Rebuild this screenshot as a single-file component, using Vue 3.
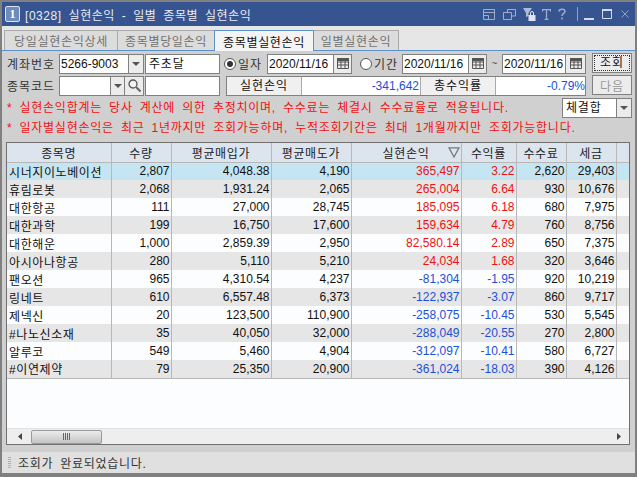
<script setup>
const cols = [104, 60, 100, 80, 110, 55, 50, 50, 14]
const heads = ['종목명', '수량', '평균매입가', '평균매도가', '실현손익', '수익률', '수수료', '세금', '']
const rows = [
  ['시너지이노베이션', '2,807', '4,048.38', '4,190', '365,497', '3.22', '2,620', '29,403'],
  ['휴림로봇', '2,068', '1,931.24', '2,065', '265,004', '6.64', '930', '10,676'],
  ['대한항공', '111', '27,000', '28,745', '185,095', '6.18', '680', '7,975'],
  ['대한과학', '199', '16,750', '17,600', '159,634', '4.79', '760', '8,756'],
  ['대한해운', '1,000', '2,859.39', '2,950', '82,580.14', '2.89', '650', '7,375'],
  ['아시아나항공', '280', '5,110', '5,210', '24,034', '1.68', '320', '3,646'],
  ['팬오션', '965', '4,310.54', '4,237', '-81,304', '-1.95', '920', '10,219'],
  ['링네트', '610', '6,557.48', '6,373', '-122,937', '-3.07', '860', '9,717'],
  ['제넥신', '20', '123,500', '110,900', '-258,075', '-10.45', '530', '5,545'],
  ['#나노신소재', '35', '40,050', '32,000', '-288,049', '-20.55', '270', '2,800'],
  ['알루코', '549', '5,460', '4,904', '-312,097', '-10.41', '580', '6,727'],
  ['#이연제약', '79', '25,350', '20,900', '-361,024', '-18.03', '390', '4,126']
]
const tabs = [
  { label: '당일실현손익상세', w: 114 },
  { label: '종목별당일손익', w: 98 },
  { label: '종목별실현손익', w: 100, active: true },
  { label: '일별실현손익', w: 86 }
]
function cellClass(i, j) {
  if (j === 0) return 'name'
  if (j === 4 || j === 5) return rows[i][4].startsWith('-') ? 'num neg' : 'num pos'
  return 'num'
}
</script>

<template>
  <div class="window">
    <header class="title">
      <span class="appnum">1</span>
      <span class="title-text">[0328] 실현손익 - 일별 종목별 실현손익</span>
      <div class="title-icons">
        <svg class="ic1" width="12" height="11" viewBox="0 0 12 11"><path d="M.5.500h11v10H.5zM.5 3.500h11M.5 6.500h5v4" fill="none" stroke="#9eaecb"/></svg>
        <svg class="ic2" width="13" height="11" viewBox="0 0 13 11"><path d="M4.500 3V.5h8v6.500H9M.5 3.500h8v7h-8z" fill="none" stroke="#9eaecb"/></svg>
        <svg class="ic3" width="13" height="13" viewBox="0 0 13 13"><path d="M0 0h9L5.500 5v3L3 9V5z" fill="#aebbd4"/><path d="M5.500 7h7v6h-7z" fill="#dfe5f0"/><path d="M7.500 7V5a1.500 1.500 0 0 1 3 0v2" fill="none" stroke="#dfe5f0"/></svg>
        <svg class="ic4" width="9" height="11" viewBox="0 0 9 11"><path d="M.5 2.500V.7h8v1.800M4.500 1v9.500M2.500 10.400h4" fill="none" stroke="#9eaecb" stroke-width="1.300"/></svg>
        <svg class="ic5" width="8" height="12" viewBox="0 0 8 12"><path d="M1 3.500C1 .5 7 .3 7 3.500 7 5.500 4 5.500 4 8M4 9.500v2" fill="none" stroke="#9eaecb" stroke-width="1.500"/></svg>
        <i class="sep"></i>
        <svg class="ic6" width="10" height="12" viewBox="0 0 10 12"><path d="M0 10h10v2H0z" fill="#d3dbea"/></svg>
        <svg class="ic7" width="10" height="10" viewBox="0 0 10 10"><path d="M.5 1.500h9v8h-9z" fill="none" stroke="#d3dbea"/><path d="M0 0h10v2H0z" fill="#d3dbea"/></svg>
        <svg class="ic8" width="8" height="8" viewBox="0 0 8 8"><path d="M.5.500l7 7M7.500.500l-7 7" stroke="#8fa2c5" fill="none"/></svg>
      </div>
    </header>

    <nav class="tabs">
      <button v-for="t in tabs" :key="t.label" class="tab" :class="{ active: t.active }" :style="{ width: t.w + 'px' }">{{ t.label }}</button>
    </nav>

    <section class="form">
      <div class="main-row">
        <div class="fields">
          <div class="row">
            <span class="lbl">계좌번호</span>
            <div class="field acct">
              <span class="val numv grow">5266-9003</span>
              <span class="btn-sq w15"><i class="tri"></i></span>
            </div>
            <div class="field name-f"><span class="val">주초달</span></div>
            <span class="radio on"></span><span class="rlbl">일자</span>
            <div class="field d1"><span class="val numv grow">2020/11/16</span><span class="btn-sq w18"><svg width="12" height="11" viewBox="0 0 12 11"><path d="M.5.500h11v10H.5zM.5 4h11M.5 7h11M4 3v8M8 3v8" fill="none" stroke="#555"/><path d="M0 0h12v3H0z" fill="#555"/></svg></span></div>
            <span class="radio r2"></span><span class="rlbl">기간</span>
            <div class="field d2"><span class="val numv grow">2020/11/16</span><span class="btn-sq w18"><svg width="12" height="11" viewBox="0 0 12 11"><path d="M.5.500h11v10H.5zM.5 4h11M.5 7h11M4 3v8M8 3v8" fill="none" stroke="#555"/><path d="M0 0h12v3H0z" fill="#555"/></svg></span></div>
            <span class="tilde">~</span>
            <div class="field d3"><span class="val numv grow">2020/11/16</span><span class="btn-sq w20"><svg width="12" height="11" viewBox="0 0 12 11"><path d="M.5.500h11v10H.5zM.5 4h11M.5 7h11M4 3v8M8 3v8" fill="none" stroke="#555"/><path d="M0 0h12v3H0z" fill="#555"/></svg></span></div>
          </div>
          <div class="row">
            <span class="lbl">종목코드</span>
            <div class="field acct">
              <span class="val grow"></span>
              <span class="btn-sq w14"><i class="tri"></i></span>
              <span class="btn-sq w19"><svg width="13" height="13" viewBox="0 0 13 13"><circle cx="5" cy="5" r="4" fill="#eef3f8" stroke="#555" stroke-width="1.300"/><path d="M8 8l4.500 4.500" stroke="#666" stroke-width="2"/></svg></span>
            </div>
            <div class="field name-f"></div>
            <div class="summary">
              <span class="sum-l">실현손익</span>
              <span class="sum-v v1">-341,642</span>
              <span class="sum-l">총수익률</span>
              <span class="sum-v v2">-0.79%</span>
            </div>
          </div>
        </div>
        <div class="actions">
          <button class="act primary"><span>조회</span></button>
          <button class="act off">다음</button>
        </div>
      </div>

      <div class="note-row">
        <p class="note first">* 실현손익합계는 당사 계산에 의한 추정치이며, 수수료는 체결시 수수료율로 적용됩니다.</p>
        <div class="field select"><span class="val grow">체결합</span><span class="btn-sq w15"><i class="tri"></i></span></div>
      </div>
      <p class="note second">* 일자별실현손익은 최근 1년까지만 조회가능하며, 누적조회기간은 최대 1개월까지만 조회가능합니다.</p>
    </section>

    <section class="grid">
      <div class="grid-body">
        <table>
          <colgroup><col v-for="(c, i) in cols" :key="i" :style="{ width: c + 'px' }" /></colgroup>
          <thead>
            <tr>
              <th v-for="(h, i) in heads" :key="i">
                {{ h }}
                <svg v-if="i === 4" class="sort" width="12" height="11" viewBox="0 0 12 11"><path d="M1 .8h10L6 10z" fill="none" stroke="#777" stroke-width="1.300"/></svg>
              </th>
            </tr>
          </thead>
          <tbody>
            <tr v-for="(r, i) in rows" :key="i" :class="{ sel: i === 0, alt: i % 2 === 1 }">
              <td v-for="(c, j) in r" :key="j" :class="cellClass(i, j)">{{ c }}</td>
              <td></td>
            </tr>
          </tbody>
        </table>
      </div>
      <div class="hscroll">
        <svg width="5" height="7" viewBox="0 0 5 7"><path d="M4 0v7L0 3.500z" fill="#444"/></svg>
        <div class="thumb"><i></i><i></i><i></i><i></i></div>
        <span class="grow"></span>
        <svg width="5" height="7" viewBox="0 0 5 7"><path d="M0 0v7l4-3.500z" fill="#444"/></svg>
      </div>
    </section>

    <footer class="status">
      <span class="grip"></span>
      <span class="status-text">조회가 완료되었습니다.</span>
    </footer>
  </div>
</template>

<style scoped>
.window {
  width: 637px;
  height: 477px;
  box-sizing: border-box;
  border: 2px solid #808080;
  border-width: 2px 2px 4px 2px;
  background: #d0d0d0;
  display: flex;
  flex-direction: column;
  overflow: hidden;
  font-family: "Liberation Sans", "Noto Sans CJK KR", sans-serif;
  font-size: 12px;
  color: #111;
}
.grow { flex: 1; }

.title {
  height: 24px;
  flex: none;
  background: #36548f;
  display: flex;
  align-items: center;
  padding-left: 3px;
  color: #e8ecf4;
}
.appnum {
  width: 13px;
  height: 14px;
  border: 1px solid #dfe6f2;
  border-radius: 2px;
  background: #6f8abd;
  color: #fff;
  font-family: "Liberation Serif", serif;
  font-weight: 700;
  font-size: 12px;
  line-height: 14px;
  text-align: center;
}
.title-text { margin-left: 5px; word-spacing: 3px; letter-spacing: 0.55px; }
.title-icons {
  margin-left: auto;
  margin-right: 6px;
  display: flex;
  align-items: center;
}
.title-icons svg { flex: none; }
.ic2 { margin-left: 8px; }
.ic3 { margin-left: 7px; }
.ic4 { margin-left: 6px; }
.ic5 { margin-left: 7px; }
.sep { width: 1px; height: 14px; background: #8fa2c5; margin-left: 11px; }
.ic6 { margin-left: 6px; }
.ic7 { margin-left: 8px; }
.ic8 { margin-left: 9px; }

.tabs {
  height: 25px;
  flex: none;
  box-sizing: border-box;
  background: #e6e6e6;
  border-bottom: 1px solid #5b92cc;
  display: flex;
  align-items: flex-end;
  padding-left: 2px;
}
.tab {
  height: 20px;
  box-sizing: border-box;
  padding: 0;
  font: inherit;
  color: #707070;
  background: #dcdcdc;
  border: 1px solid #aaa;
  border-bottom: none;
  margin-right: -1px;
  letter-spacing: 0.7px;
}
.tab.active {
  height: 21px;
  margin-bottom: -1px;
  background: #f4f4f4;
  color: #111;
  border-color: #5b92cc;
  position: relative;
}

.form { padding: 2px 3px 0 5px; flex: none; }
.main-row { display: flex; gap: 5px; }
.fields { display: flex; flex-direction: column; gap: 1px; width: 580px; }
.row { display: flex; align-items: center; height: 21px; }
.lbl { width: 52px; color: #333; letter-spacing: 1px; }
.field {
  height: 20px;
  box-sizing: border-box;
  border: 1px solid #808080;
  background: #fff;
  display: flex;
  align-items: stretch;
  line-height: 18px;
  flex: none;
}
.acct { width: 85px; }
.val { padding-left: 3px; white-space: nowrap; letter-spacing: 0.8px; }
.val.numv { padding-left: 1px; letter-spacing: 0; }
.name-f { width: 75px; margin-left: 1px; }
.btn-sq {
  flex: none;
  box-sizing: border-box;
  background: #ececec;
  border-left: 1px solid #808080;
  display: flex;
  align-items: center;
  justify-content: center;
}
.w14 { width: 14px; }
.w15 { width: 15px; }
.w18 { width: 18px; }
.w19 { width: 19px; }
.w20 { width: 20px; }
.tri {
  width: 0;
  height: 0;
  border-left: 4px solid transparent;
  border-right: 4px solid transparent;
  border-top: 4px solid #555;
}
.radio {
  width: 12px;
  height: 12px;
  box-sizing: border-box;
  border-radius: 50%;
  border: 1px solid #555;
  background: #fff;
  flex: none;
  margin-left: 4px;
  position: relative;
}
.radio.r2 { margin-left: 8px; }
.radio.on::after {
  content: "";
  position: absolute;
  left: 2px;
  top: 2px;
  width: 6px;
  height: 6px;
  border-radius: 50%;
  background: #333;
}
.rlbl { margin-left: 2px; color: #333; width: 25px; letter-spacing: 1px; white-space: nowrap; }
.d1 { width: 85px; margin-left: 4px; }
.d2 { width: 85px; margin-left: 3px; }
.d3 { width: 84px; }
.tilde { width: 15px; text-align: center; color: #555; font-size: 10px; }
.summary { display: flex; height: 20px; margin-left: 6px; border: 1px solid #808080; box-sizing: border-box; width: 360px; flex: none; }
.sum-l { width: 75px; background: #f0f0f0; text-align: center; line-height: 18px; flex: none; letter-spacing: 1px; border-right: 1px solid #aaa; box-sizing: border-box; }
.sum-v { background: #fff; color: #1c50d8; text-align: right; line-height: 18px; padding-right: 1px; flex: none; box-sizing: border-box; border-right: 1px solid #aaa; }
.sum-v.v2 { border-right: none; padding-right: 0; }
.v1 { width: 119px; }
.v2 { width: 89px; }

.actions { display: flex; flex-direction: column; gap: 2px; }
.act {
  width: 40px;
  height: 20px;
  padding: 0;
  box-sizing: border-box;
  font: inherit;
  letter-spacing: 1px;
  background: #ececec;
  border: 1px solid #808080;
  color: #111;
}
.act.primary span {
  display: block;
  margin: 1px;
  line-height: 14px;
  border: 1px dotted #333;
}
.act.off { color: #999; }

.note-row { display: flex; align-items: center; justify-content: space-between; height: 21px; margin-top: 1px; }
.note { margin: 0; color: #f01010; letter-spacing: 0.75px; word-spacing: 3px; white-space: nowrap; }
.first { margin-top: -2px; }
.select { width: 70px; }
.second { height: 21px; line-height: 21px; }

.grid {
  margin: 3px 5px 0 4px;
  height: 303px;
  flex: none;
  box-sizing: border-box;
  border: 1px solid #707070;
  background: #fcfdff;
  display: flex;
  flex-direction: column;
}
.grid-body { flex: 1; overflow: hidden; }
table {
  border-collapse: collapse;
  table-layout: fixed;
  width: 623px;
}
th {
  height: 19px;
  padding: 0;
  box-sizing: border-box;
  background: #dce4ee;
  border-right: 1px solid #b8b8b8;
  border-bottom: 1px solid #b8b8b8;
  font-weight: 400;
  letter-spacing: 0.7px;
  text-align: center;
  position: relative;
  color: #222;
}
.sort { position: absolute; right: 1px; top: 4px; }
td {
  height: 18px;
  padding: 0 1px 0 2px;
  box-sizing: border-box;
  border-right: 1px solid #b8b8b8;
  white-space: nowrap;
  overflow: hidden;
}
tbody tr:last-child td { border-bottom: 1px solid #b8b8b8; }
tr.alt td { background: #e6e6e6; }
tr.sel td { background: #c6e5f2; }
.name { letter-spacing: 0.6px; }
.num { text-align: right; }
.pos { color: #f01010; }
.neg { color: #1c50d8; }

.hscroll {
  height: 16px;
  flex: none;
  background: #eeeeee;
  border-top: 1px solid #e2e2e2;
  box-sizing: border-box;
  display: flex;
  align-items: center;
  padding: 0 7px 0 11px;
}
.thumb {
  width: 71px;
  height: 14px;
  margin-left: 8px;
  box-sizing: border-box;
  border: 1px solid #9a9a9a;
  border-radius: 2px;
  background: linear-gradient(#ececec, #c4c4c4);
  display: flex;
  align-items: center;
  justify-content: center;
  gap: 1px;
}
.thumb i { width: 1px; height: 7px; background: #666; }

.status {
  margin-top: 6px;
  flex: 1;
  background: #e0e0e0;
  border-top: 1px solid #cfcfcf;
  display: flex;
  align-items: center;
  padding-left: 6px;
}
.grip {
  width: 3px;
  height: 12px;
  background: repeating-linear-gradient(#b0b0b0 0 1px, transparent 1px 2px);
}
.status-text { margin-left: 7px; letter-spacing: 0.7px; word-spacing: 3px; color: #333; }
</style>
